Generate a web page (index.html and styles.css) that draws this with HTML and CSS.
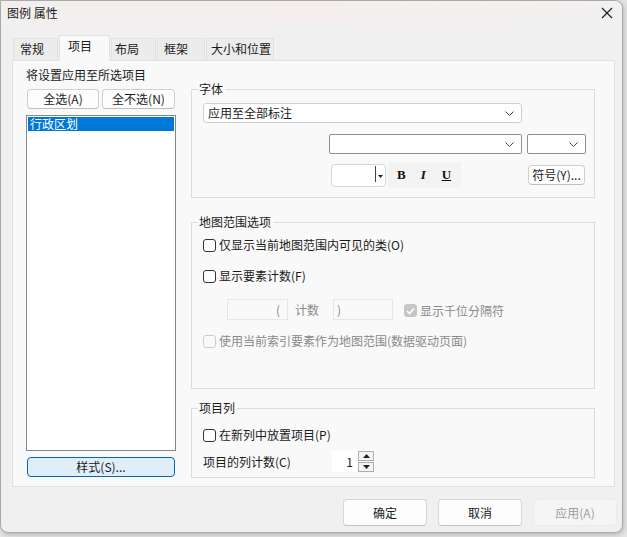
FILE: index.html
```html
<!DOCTYPE html>
<html lang="zh">
<head>
<meta charset="utf-8">
<title>图例 属性</title>
<link rel="stylesheet" href="styles.css">
</head>
<body>
<div class="window">
  <div class="titlebar">
    <span class="title">图例 属性</span>
    <span class="close"><svg width="12" height="12" viewBox="0 0 12 12"><path d="M1 1 L11 11 M11 1 L1 11" stroke="#1a1a1a" stroke-width="1.1" fill="none"/></svg></span>
  </div>
  <div class="tabs">
    <div class="tab t1">常规</div>
    <div class="tab active">项目</div>
    <div class="tab t3">布局</div>
    <div class="tab t4">框架</div>
    <div class="tab t5">大小和位置</div>
  </div>
  <div class="panel">
    <div class="leftcol">
      <div class="lbl">将设置应用至所选项目</div>
      <div class="btnrow">
        <div class="btn b-all">全选(A)</div>
        <div class="btn b-none">全不选(N)</div>
      </div>
      <div class="listbox">
        <div class="item sel">行政区划</div>
      </div>
      <div class="btn b-style">样式(S)...</div>
    </div>
    <div class="rightcol">
      <fieldset class="group g-font">
        <legend>字体</legend>
        <div class="ginner">
          <div class="select s-apply"><span>应用至全部标注</span><svg class="chev" width="9" height="5" viewBox="0 0 9 5"><path d="M0.5 0.5 L4.5 4.5 L8.5 0.5" stroke="#444" fill="none" stroke-width="1"/></svg></div>
          <div class="row r2">
            <div class="select s-dark s-fontname"><span></span><svg class="chev" width="9" height="5" viewBox="0 0 9 5"><path d="M0.5 0.5 L4.5 4.5 L8.5 0.5" stroke="#444" fill="none" stroke-width="1"/></svg></div>
            <div class="select s-dark s-size"><span></span><svg class="chev" width="9" height="5" viewBox="0 0 9 5"><path d="M0.5 0.5 L4.5 4.5 L8.5 0.5" stroke="#444" fill="none" stroke-width="1"/></svg></div>
          </div>
          <div class="row r3">
            <div class="colorcombo"><span class="cbody"></span><span class="cdiv"></span><span class="carrow"><svg width="5" height="3" viewBox="0 0 5 3"><path d="M0 0 L5 0 L2.5 3 Z" fill="#222"/></svg></span></div>
            <div class="biu">
              <span class="fb">B</span>
              <span class="fi">I</span>
              <span class="fu">U</span>
            </div>
            <div class="btn b-sym">符号(Y)...</div>
          </div>
        </div>
      </fieldset>

      <fieldset class="group g-map">
        <legend>地图范围选项</legend>
        <div class="ginner">
          <label class="chk c1"><span class="box"></span><span>仅显示当前地图范围内可见的类(O)</span></label>
          <label class="chk c2"><span class="box"></span><span>显示要素计数(F)</span></label>
          <div class="row countrow">
            <div class="tbox tb1">(</div>
            <span class="cnt">计数</span>
            <div class="tbox tb2">)</div>
            <label class="chk dis checked"><span class="box"><svg width="9" height="8" viewBox="0 0 9 8"><path d="M1 4 L3.5 6.5 L8 1.5" stroke="#fff" stroke-width="1.6" fill="none"/></svg></span><span>显示千位分隔符</span></label>
          </div>
          <label class="chk dis c4"><span class="box"></span><span>使用当前索引要素作为地图范围(数据驱动页面)</span></label>
        </div>
      </fieldset>

      <fieldset class="group g-col">
        <legend>项目列</legend>
        <div class="ginner">
          <label class="chk c5"><span class="box"></span><span>在新列中放置项目(P)</span></label>
          <div class="row colrow">
            <span class="clbl">项目的列计数(C)</span>
            <div class="spinner">
              <span class="sval">1</span>
              <span class="sbtns">
                <span class="sb"><svg width="7" height="4" viewBox="0 0 7 4"><path d="M0 4 L7 4 L3.5 0 Z" fill="#222"/></svg></span>
                <span class="sb"><svg width="7" height="4" viewBox="0 0 7 4"><path d="M0 0 L7 0 L3.5 4 Z" fill="#222"/></svg></span>
              </span>
            </div>
          </div>
        </div>
      </fieldset>
    </div>
  </div>
  <div class="footer">
    <div class="fbtn">确定</div>
    <div class="fbtn">取消</div>
    <div class="fbtn disabled">应用(A)</div>
  </div>
</div>
</body>
</html>
```

FILE: styles.css
```css
* { box-sizing: border-box; }
html, body { margin: 0; padding: 0; }
body {
  width: 627px;
  height: 537px;
  background: #e4e4e4;
  font-family: "Noto Sans CJK SC", "Noto Sans", sans-serif;
  font-size: 12px;
  color: #1a1a1a;
  overflow: hidden;
}
.window {
  width: 623px;
  height: 533px;
  background: #f0f0f0;
  border: 1px solid #a9a9a9;
  border-radius: 0 8px 8px 8px;
  display: flex;
  flex-direction: column;
  box-shadow: 1px 2px 4px rgba(0,0,0,0.18);
}
.titlebar {
  height: 27px;
  display: flex;
  justify-content: space-between;
  align-items: flex-start;
  padding: 4px 8px 0 6px;
  background: linear-gradient(90deg, #f2efef, #f4efee 50%, #f2f0f0);
  border-radius: 0 8px 0 0;
  line-height: 16px;
}
.close { padding-top: 2px; padding-right: 1px; display: flex; }
.tabs {
  height: 32px;
  display: flex;
  align-items: flex-end;
  padding-left: 12px;
}
.tab {
  height: 22px;
  line-height: 20px;
  background: #ececec;
  border: 1px solid #e2e2e2;
  border-bottom: none;
  margin-right: 1px;
}
.tab.t1 { width: 45px; padding-left: 6px; }
.tab.t3 { width: 45px; padding-left: 3px; }
.tab.t4 { width: 48px; padding-left: 6px; }
.tab.t5 { width: 68px; padding-left: 4px; margin-right: 0; }
.tab.active {
  height: 26px;
  width: 51px;
  line-height: 20px;
  padding-left: 8px;
  background: #f9f9f9;
  border-color: #e2e2e2;
  margin-bottom: -1px;
  position: relative;
  z-index: 1;
}
.panel {
  height: 427px;
  margin: 0 7px 0 11px;
  background: #f9f9f9;
  border: 1px solid #e2e2e2;
  display: flex;
  padding: 7px 0 0 13px;
}
.leftcol {
  width: 150px;
  display: flex;
  flex-direction: column;
}
.lbl { height: 14px; line-height: 14px; }
.btnrow {
  display: flex;
  margin-top: 7px;
  padding-left: 1px;
  gap: 3px;
}
.btn {
  height: 20px;
  line-height: 18px;
  text-align: center;
  background: #fdfdfd;
  border: 1px solid #d0d0d0;
  border-bottom-color: #bdbdbd;
  border-radius: 4px;
}
.b-all { width: 72px; }
.b-none { width: 73px; }
.listbox {
  margin-top: 6px;
  height: 336px;
  width: 150px;
  background: #fff;
  border: 1px solid #828790;
  padding: 1px;
}
.item { height: 14px; line-height: 14px; padding-left: 2px; }
.item.sel { background: #0078d7; color: #fff; }
.b-style {
  margin-top: 6px;
  margin-left: 1px;
  width: 148px;
  background: #e0eef9;
  border: 1px solid #0067c0;
  border-radius: 4px;
}
.rightcol {
  margin-left: 15px;
  width: 404px;
  display: flex;
  flex-direction: column;
}
fieldset.group {
  margin: 0;
  padding: 0;
  border: 1px solid #dcdcdc;
  min-width: 0;
}
fieldset.group legend {
  padding: 0 2px 0 1px;
  margin-left: 6px;
  line-height: 14px;
  height: 14px;
}
.ginner { padding-left: 11px; }
fieldset.g-font { margin-top: 14px; height: 116px; }
.g-font .ginner { padding-top: 7px; }
.select {
  height: 20px;
  background: #fff;
  border: 1px solid #cfcfcf;
  border-radius: 3px;
  display: flex;
  align-items: center;
  justify-content: space-between;
  padding: 0 7px 0 4px;
  line-height: 16px;
}
.s-apply { width: 319px; }
.s-dark { border-color: #8f8f8f; border-radius: 2px; }
.row { display: flex; align-items: center; }
.r2 { margin-top: 11px; padding-left: 126px; gap: 5px; }
.s-fontname { width: 193px; }
.s-size { width: 59px; }
.r3 { margin-top: 8px; padding-left: 128px; height: 26px; }
.colorcombo {
  width: 55px;
  height: 23px;
  border: 1px solid #d6d6d6;
  border-radius: 4px;
  background: #fff;
  display: flex;
  align-items: center;
}
.cbody { flex: 1; }
.cdiv { width: 1px; height: 16px; background: #444; margin-top: -2px; }
.carrow { width: 9px; display: flex; justify-content: center; padding-top: 2px; }
.biu {
  margin-left: 2px;
  width: 73px;
  height: 26px;
  background: #f3f3f3;
  border-radius: 3px;
  display: flex;
  align-items: center;
  font-family: "Liberation Serif", "DejaVu Serif", serif;
  font-weight: bold;
  font-size: 13px;
  color: #111;
}
.fb { margin-left: 9px; }
.fi { margin-left: 15px; font-style: italic; }
.fu { margin-left: 16px; text-decoration: underline; }
.b-sym { margin-left: 67px; width: 57px; line-height: 18px; }
fieldset.g-map { margin-top: 17px; height: 174px; }
.chk {
  display: flex;
  align-items: center;
  height: 16px;
  line-height: 16px;
}
.chk .box {
  width: 13px;
  height: 13px;
  border: 1px solid #333;
  border-radius: 3px;
  background: #fff;
  margin-right: 3px;
  display: flex;
  align-items: center;
  justify-content: center;
}
.chk.dis { color: #8a8a8a; }
.chk.dis .box { border-color: #cdcdcd; background: #fafafa; }
.chk.dis.checked .box { background: #c6c6c6; border-color: #c6c6c6; }
.c1 { margin-top: 8px; }
.c2 { margin-top: 15px; }
.countrow { margin-top: 15px; padding-left: 24px; height: 21px; }
.tbox {
  height: 21px;
  border: 1px solid #e6e6e6;
  background: #f9f9f9;
  color: #8a8a8a;
  line-height: 19px;
}
.tb1 { width: 61px; text-align: right; padding-right: 7px; }
.cnt { color: #8a8a8a; margin-left: 7px; margin-right: 14px; }
.tb2 { width: 60px; padding-left: 3px; }
.countrow .chk { margin-left: 11px; margin-top: 2px; }
.c4 { margin-top: 13px; }
fieldset.g-col { margin-top: 12px; height: 77px; }
.c5 { margin-top: 12px; }
.colrow { margin-top: 7px; height: 22px; }
.clbl { width: 129px; }
.spinner {
  width: 43px;
  height: 22px;
  background: #fff;
  display: flex;
  align-items: center;
  justify-content: flex-end;
}
.sval { margin-right: 5px; }
.sbtns { display: flex; flex-direction: column; gap: 1px; margin-right: 1px; }
.sb {
  width: 16px;
  height: 10px;
  border: 1px solid #adadad;
  background: #f4f4f4;
  display: flex;
  align-items: center;
  justify-content: center;
}
.footer {
  flex: 1;
  display: flex;
  justify-content: flex-end;
  align-items: flex-start;
  padding: 12px 5px 0 0;
  gap: 11px;
}
.fbtn {
  width: 84px;
  height: 27px;
  line-height: 25px;
  text-align: center;
  background: #fdfdfd;
  border: 1px solid #d6d6d6;
  border-bottom-color: #c2c2c2;
  border-radius: 4px;
}
.fbtn.disabled {
  background: #f5f5f5;
  border-color: #ececec;
  color: #9d9d9d;
}
```
